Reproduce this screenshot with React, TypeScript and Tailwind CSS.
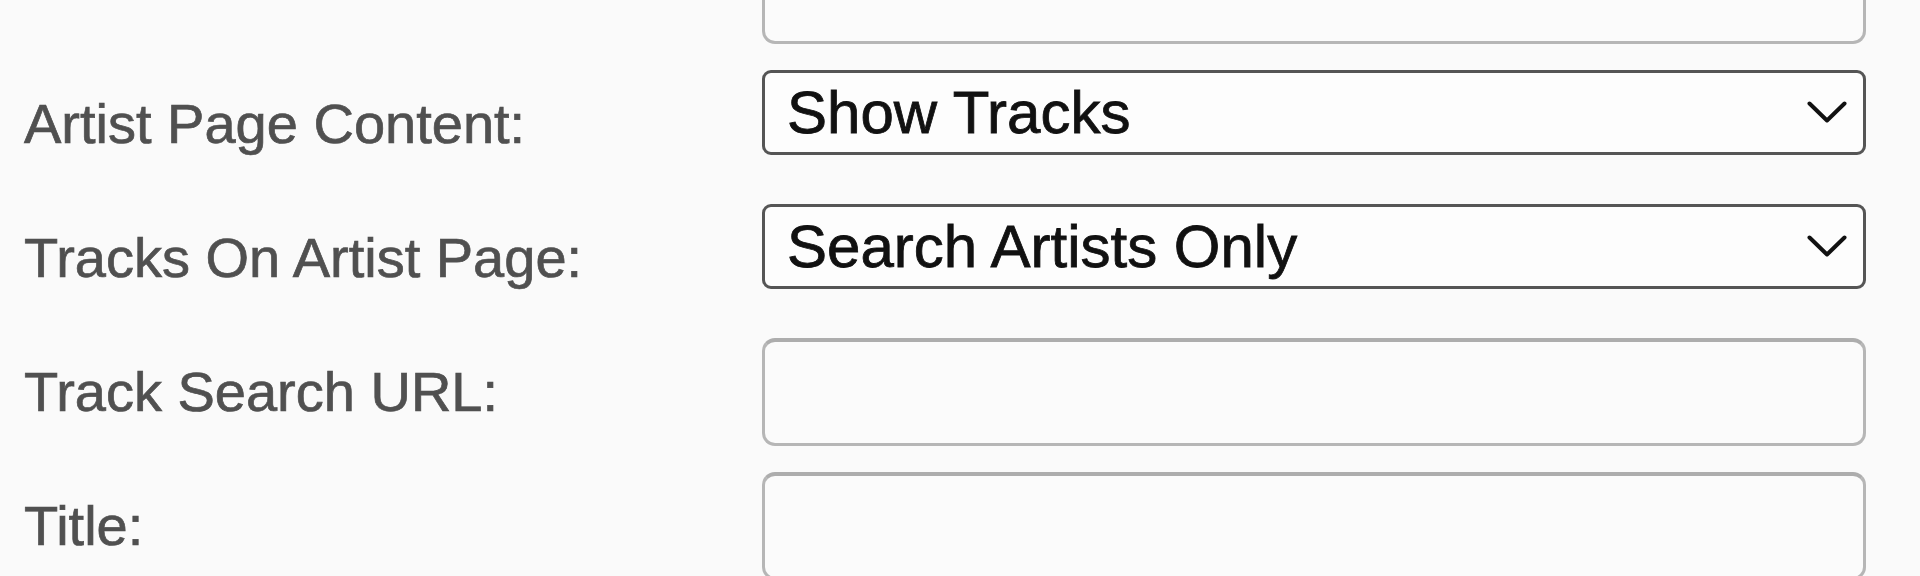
import React from 'react';

type Field = {
  label: string;
  kind: 'input' | 'select';
  value?: string;
};

const fields: Field[] = [
  { label: '', kind: 'input' },
  { label: 'Artist Page Content:', kind: 'select', value: 'Show Tracks' },
  { label: 'Tracks On Artist Page:', kind: 'select', value: 'Search Artists Only' },
  { label: 'Track Search URL:', kind: 'input' },
  { label: 'Title:', kind: 'input' },
];

const Chevron = () => (
  <svg width="40" height="23" viewBox="0 0 40 23" fill="none" className="shrink-0">
    <path d="M2.5 2.5 L20 19.5 L37.5 2.5" stroke="#111" strokeWidth="4" strokeLinecap="round" strokeLinejoin="round" />
  </svg>
);

const App = () => {
  return (
    <div className="h-[576px] overflow-hidden bg-[#fafafa] [font-family:'Liberation_Sans',Arial,sans-serif]">
      <div className="-mt-[64px] pl-[24px] pr-[54px] flex flex-col gap-[26px]">
        {fields.map((field, index) => (
          <div key={index} className="grid grid-cols-[738px_1fr] h-[108px]">
            {/* label */}
            <div className="flex items-center text-[56px] text-[#505050] [-webkit-text-stroke:0.7px_#505050]">
              {field.label}
            </div>

            {field.kind === 'select' ? (
              <button
                type="button"
                className="h-[85px] self-start flex items-center justify-between rounded-[9px] border-[3px] border-[#555555] bg-[#fdfdfd] pl-[22px] pr-[16px] text-[60px] text-[#111] text-left [font-family:'Liberation_Sans',Arial,sans-serif] [-webkit-text-stroke:0.8px_#111]"
              >
                <span>{field.value}</span>
                <Chevron />
              </button>
            ) : (
              <input
                type="text"
                className="h-[108px] w-full rounded-[13px] border-[3px] border-t-[4px] border-[#b6b6b6] border-t-[#adadad] bg-[#fbfbfb] px-[20px] text-[56px] outline-none"
              />
            )}
          </div>
        ))}
      </div>
    </div>
  );
};

export default App;
